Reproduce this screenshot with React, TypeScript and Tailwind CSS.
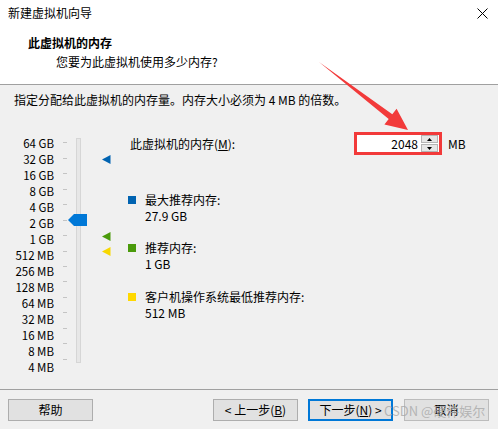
import React from "react";

const LABELS = [
  "64 GB", "32 GB", "16 GB", "8 GB", "4 GB", "2 GB", "1 GB", "512 MB",
  "256 MB", "128 MB", "64 MB", "32 MB", "16 MB", "8 MB", "4 MB",
];

function Marker({ color, top }: { color: string; top: string }) {
  return (
    <svg className={`absolute left-[102px] ${top}`} width="9" height="9" viewBox="0 0 9 9">
      <polygon points="0,4.5 8.5,0 8.5,9" fill={color} />
    </svg>
  );
}

function Legend({ color, title, value }: { color: string; title: string; value: string }) {
  return (
    <div className="flex">
      <div className={`w-[8px] h-[8px] mt-[4px] ${color}`} />
      <div className="ml-[9px] leading-[16px]">
        <div>{title}</div>
        <div>{value}</div>
      </div>
    </div>
  );
}

export default function App() {
  return (
    <div className="relative w-[498px] h-[429px] overflow-hidden bg-[#f0f0f0] text-[12px] text-black font-['Noto_Sans_CJK_SC','Microsoft_YaHei',sans-serif]">
      {/* header */}
      <div className="h-[85px] bg-white border-b border-[#a0a0a0]">
        <div className="h-[26px] flex items-center justify-between pl-[8px] pr-[10px]">
          <span>新建虚拟机向导</span>
          <svg width="11" height="11" viewBox="0 0 11 11" className="mt-[1px]">
            <path d="M0.5 0.5 L10.5 10.5 M10.5 0.5 L0.5 10.5" stroke="#000" strokeWidth="1" />
          </svg>
        </div>
        <div className="mt-[7px] h-[20px] leading-[20px] pl-[28px] font-bold">此虚拟机的内存</div>
        <div className="h-[18px] leading-[18px] pl-[56px]">您要为此虚拟机使用多少内存?</div>
      </div>

      <div className="mt-[7px] h-[16px] leading-[16px] pl-[14px]">
        指定分配给此虚拟机的内存量。内存大小必须为 4 MB 的倍数。
      </div>

      {/* main */}
      <div className="mt-[12px] h-[269px] flex">
        <div className="relative w-[128px] h-full flex">
          <div className="mt-[15px] w-[54px] h-[232px] flex flex-col justify-between text-right text-[11.5px]">
            {LABELS.map((l) => (
              <div key={l} className="h-[16px] leading-[16px]">{l}</div>
            ))}
          </div>
          <div className="mt-[15px] ml-[9px] w-[4px] h-[232px] flex flex-col justify-between">
            {LABELS.map((l) => (
              <div key={l} className="h-[16px] flex items-center">
                <div className="w-[4px] h-[1px] bg-[#c4c4c4]" />
              </div>
            ))}
          </div>
          <div className="mt-[18px] ml-[9px] w-[5px] h-[225px] border border-[#d6d6d6] bg-[#e7e7e7]" />

          <svg className="absolute left-[68px] top-[94px]" width="19" height="12" viewBox="0 0 19 12">
            <polygon points="0,6 6,0 19,0 19,12 6,12" fill="#0078d7" />
          </svg>
          <Marker color="#0063b1" top="top-[35px]" />
          <Marker color="#4a9a0b" top="top-[112px]" />
          <Marker color="#f7d700" top="top-[127px]" />
        </div>

        <div className="flex-1 flex flex-col">
          <div className="mt-[12px] h-[23px] flex items-center">
            <span className="w-[226px] pl-[2px]">
              此虚拟机的内存(<span className="underline">M</span>):
            </span>
            <div className="w-[88px] h-[23px] border-[3px] border-[#f23a3a] bg-white flex">
              <div className="flex-1 text-right pr-[3px] leading-[17px]">2048</div>
              <div className="w-[18px] flex flex-col gap-[1px] py-[0px] pr-[1px]">
                <div className="flex-1 bg-[#e6e6e6] border border-[#b4b4b4] flex items-center justify-center">
                  <svg width="5" height="3" viewBox="0 0 5 3"><polygon points="2.5,0 5,3 0,3" fill="#000" /></svg>
                </div>
                <div className="flex-1 bg-[#e6e6e6] border border-[#b4b4b4] flex items-center justify-center">
                  <svg width="5" height="3" viewBox="0 0 5 3"><polygon points="0,0 5,0 2.5,3" fill="#000" /></svg>
                </div>
              </div>
            </div>
            <span className="ml-[6px]">MB</span>
          </div>

          <div className="mt-[37px] flex flex-col gap-[16px]">
            <Legend color="bg-[#0063b1]" title="最大推荐内存:" value="27.9 GB" />
            <Legend color="bg-[#4a9a0b]" title="推荐内存:" value="1 GB" />
            <div className="mt-[1px]">
              <Legend color="bg-[#ffd800]" title="客户机操作系统最低推荐内存:" value="512 MB" />
            </div>
          </div>
        </div>
      </div>

      {/* footer */}
      <div className="h-[40px] border-t border-[#a0a0a0] pt-[9px] flex">
        <button className="ml-[8px] w-[85px] h-[22px] bg-[#e1e1e1] border border-[#adadad]">帮助</button>
        <button className="ml-[120px] w-[85px] h-[22px] bg-[#e1e1e1] border border-[#adadad]">
          &lt; 上一步(<span className="underline">B</span>)
        </button>
        <button className="ml-[10px] w-[85px] h-[22px] bg-[#e1e1e1] border-2 border-[#0078d7]">
          下一步(<span className="underline">N</span>) &gt;
        </button>
        <button className="ml-[11px] w-[85px] h-[22px] bg-[#e1e1e1] border border-[#bcbcbc]">取消</button>
      </div>

      {/* annotation arrow */}
      <svg className="absolute left-0 top-0 pointer-events-none" width="498" height="429" viewBox="0 0 498 429">
        <polygon
          points="319,62 392.3,114.2 396.6,108.7 408,130 384.4,124.6 388.7,119"
          fill="#f23a3a"
        />
      </svg>

      {/* watermark */}
      <div className="absolute left-[384px] top-[402px] text-[13px] leading-[18px] text-[#a8a8a8]/80 pointer-events-none">
        CSDN @硬件娱尔
      </div>
    </div>
  );
}
